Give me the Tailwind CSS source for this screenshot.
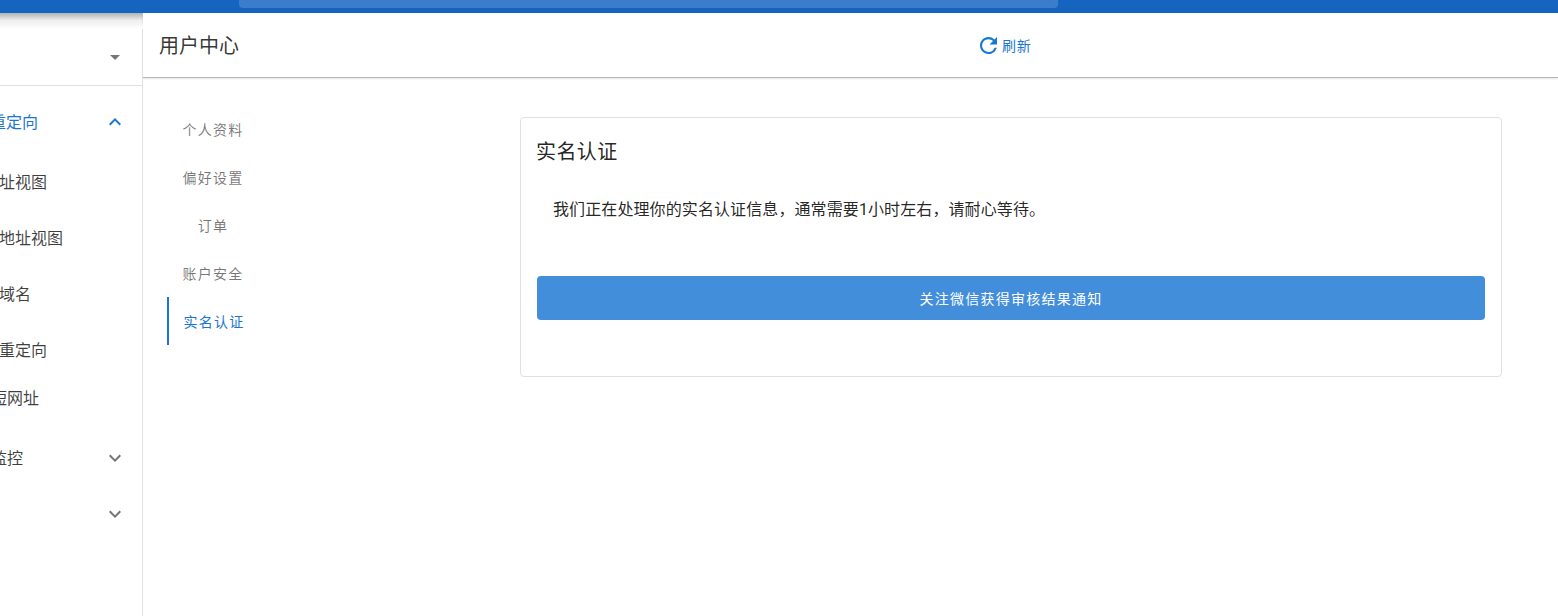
<!DOCTYPE html>
<html lang="zh-CN">
<head>
    <meta charset="UTF-8">
    <title>用户中心</title>
    <script src="https://cdn.jsdelivr.net/npm/@tailwindcss/browser@4"></script>
</head>
<body class="bg-white">
<div class="w-[1558px] h-[616px] overflow-hidden flex flex-col font-['Roboto','Noto_Sans_CJK_SC',sans-serif] text-black/87">
    <!-- top bar -->
    <div class="h-[13px] shrink-0 bg-[#1565c0] pl-[239px]">
        <div class="w-[819px] h-[8px] bg-white/16 rounded-b-[4px]"></div>
    </div>

    <div class="flex flex-1 min-h-0">
        <!-- sidebar, cut off at the left edge of the window -->
        <div class="relative w-[143px] shrink-0 overflow-hidden text-[16px] text-black/75">
            <div class="absolute top-[15px] bottom-0 right-0 w-px bg-[#e0e0e0]"></div>
            <div class="absolute top-0 left-0 right-0 h-[16px] bg-gradient-to-b from-black/30 via-black/5 to-white"></div>
            <div class="h-[73px] flex items-center justify-end pr-[22px] pt-[17px] border-b border-[#e0e0e0] mr-px">
                <svg class="w-[10px] h-[5px]" viewBox="0 0 10 5"><path d="M0 0h10L5 5z" fill="#757575"/></svg>
            </div>
            <div class="h-[72px] flex items-center justify-between pr-[16px] text-[#1976d2]">
                <span class="ml-[-10px] pt-[2px]">重定向</span>
                <svg class="w-[24px] h-[24px]" viewBox="0 0 24 24"><path d="M7.41 15.41 12 10.83l4.59 4.58L18 14l-6-6-6 6z" fill="#1976d2"/></svg>
            </div>
            <div class="h-[50px] flex items-center"><span class="ml-[-17px]">地址视图</span></div>
            <div class="h-[56px] mt-[3px] flex items-center"><span class="ml-[-1px]">地址视图</span></div>
            <div class="h-[56px] flex items-center"><span class="ml-[-1px]">域名</span></div>
            <div class="h-[56px] flex items-center"><span class="ml-[-1px]">重定向</span></div>
            <div class="h-[40px] flex items-center"><span class="ml-[-9px]">短网址</span></div>
            <div class="h-[80px] flex items-center justify-between pr-[16px]">
                <span class="ml-[-9px]">监控</span>
                <svg class="w-[24px] h-[24px] mb-[2px]" viewBox="0 0 24 24"><path d="M7.41 8.59 12 13.17l4.59-4.58L18 10l-6 6-6-6z" fill="#757575"/></svg>
            </div>
            <div class="h-[32px] flex items-center justify-end pr-[16px]">
                <svg class="w-[24px] h-[24px] mb-[2px] shrink-0" viewBox="0 0 24 24"><path d="M7.41 8.59 12 13.17l4.59-4.58L18 10l-6 6-6-6z" fill="#757575"/></svg>
            </div>
        </div>

        <!-- main -->
        <div class="flex-1 min-w-0 flex flex-col">
            <div class="h-[65px] shrink-0 flex items-center pl-[16px] border-b border-[#b4b4b4] shadow-[0_1px_2px_rgba(0,0,0,0.1)]">
                <h1 class="w-[80px] pt-[2px] text-[20px] font-normal whitespace-nowrap text-black/80">用户中心</h1>
                <div class="ml-[741px] flex items-center gap-[5px] text-[14px] text-[#1976d2]">
                    <svg class="w-[17px] h-[17px]" viewBox="4 4 16 16"><path d="M17.65 6.35A7.958 7.958 0 0 0 12 4c-4.42 0-7.99 3.58-7.99 8s3.57 8 7.99 8c3.73 0 6.84-2.55 7.73-6h-2.08A5.99 5.99 0 0 1 12 18c-3.31 0-6-2.69-6-6s2.69-6 6-6c1.66 0 3.14.69 4.22 1.78L13 11h7V4l-2.35 2.35z" fill="#1976d2"/></svg>
                    <span class="pt-[2px] tracking-[0.8px]">刷新</span>
                </div>
            </div>

            <div class="flex-1 flex pl-[24px] pt-[27px]">
                <!-- vertical tabs -->
                <div class="w-[92px] shrink-0 text-[14px] tracking-[1.25px] text-black/54">
                    <div class="h-[48px] pt-[2px] flex items-center justify-center">个人资料</div>
                    <div class="h-[48px] pt-[2px] flex items-center justify-center">偏好设置</div>
                    <div class="h-[48px] pt-[2px] flex items-center justify-center">订单</div>
                    <div class="h-[48px] pt-[2px] flex items-center justify-center">账户安全</div>
                    <div class="h-[48px] pt-[2px] flex items-center justify-center border-l-2 border-[#1976d2] text-[#1976d2]">实名认证</div>
                </div>

                <!-- card -->
                <div class="ml-[261px] mt-[12px] w-[982px] h-[260px] border border-[#e0e0e0] rounded-[4px] px-[16px]">
                    <h2 class="mt-[19px] ml-[-1px] text-[20px] leading-[30px] font-normal tracking-[0.4px]">实名认证</h2>
                    <p class="mt-[31px] pl-[16px] text-[16px] leading-[24px] tracking-[0.1px]">我们正在处理你的实名认证信息，通常需要1小时左右，请耐心等待。</p>
                    <button class="mt-[54px] w-full h-[44px] pt-[2px] rounded-[4px] bg-[#428edb] text-white text-[14px] tracking-[1.25px]">关注微信获得审核结果通知</button>
                </div>
            </div>
        </div>
    </div>
</div>
</body>
</html>
